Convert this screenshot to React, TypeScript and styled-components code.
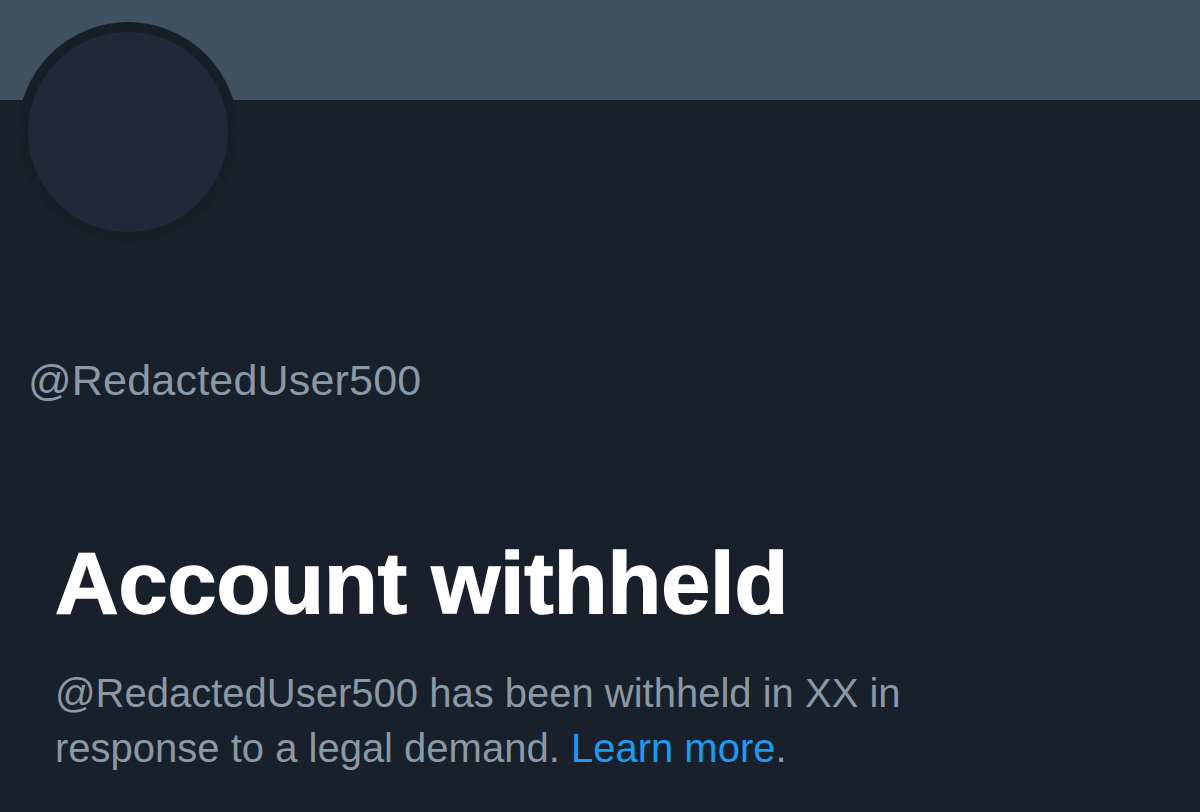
import styled, { createGlobalStyle } from 'styled-components';

const GlobalStyle = createGlobalStyle`
  html, body {
    margin: 0;
    padding: 0;
    background: #18202b;
  }
  body {
    font-family: 'Liberation Sans', Arial, sans-serif;
  }
`;

// handle replaced with a neutral placeholder
const HANDLE = '@RedactedUser500';

const Page = styled.div`
  width: 1200px;
  height: 812px;
  overflow: hidden;
  background: #18202b;
  position: relative;
`;

const Banner = styled.div`
  height: 100px;
  background: #425162;
`;

const Avatar = styled.div`
  position: absolute;
  left: 18px;
  top: 22px;
  width: 200px;
  height: 200px;
  border-radius: 50%;
  border: 10px solid #161e28;
  background: #1f2937;
`;

const Body = styled.div`
  padding: 0 0 0 28px;
`;

const Handle = styled.div`
  margin-top: 250px;
  font-size: 43px;
  line-height: 60px;
  color: #8b98a5;
  letter-spacing: 0.2px;
`;

const Notice = styled.div`
  margin-top: 125px;
  padding-left: 27px;
  width: 1010px;
`;

const Title = styled.h1`
  margin: 0;
  font-family: 'Liberation Sans', Arial, sans-serif;
  font-weight: 700;
  font-size: 88px;
  line-height: 96px;
  color: #ffffff;
  letter-spacing: 0;
  -webkit-text-stroke: 1.5px #ffffff;
`;

const Description = styled.p`
  margin: 35px 0 0;
  font-size: 40px;
  line-height: 55px;
  color: #8b98a5;
`;

const Link = styled.a`
  color: #1d9bf0;
  text-decoration: none;
`;

export default function App() {
  return (
    <>
      <GlobalStyle />
      <Page>
        <Banner />
        <Avatar />
        <Body>
          <Handle>{HANDLE}</Handle>
          <Notice>
            <Title>Account withheld</Title>
            <Description>
              {HANDLE} has been withheld in XX in response to a legal demand.{' '}
              <Link href="#">Learn more</Link>.
            </Description>
          </Notice>
        </Body>
      </Page>
    </>
  );
}
